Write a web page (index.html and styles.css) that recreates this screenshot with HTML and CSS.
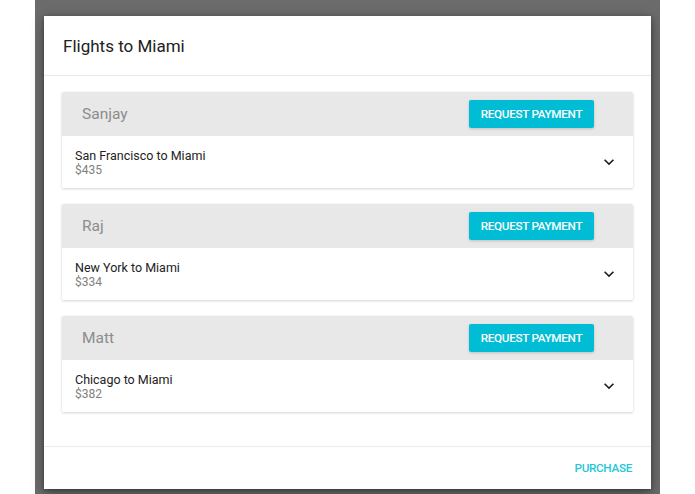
FILE: index.html
```html
<!DOCTYPE html>
<html>
<head>
<meta charset="utf-8">
<link rel="stylesheet" href="styles.css">
</head>
<body>
<div class="page">
  <div class="side"></div>
  <div class="overlay">
    <div class="dialog">
      <div class="dialog-title">Flights to Miami</div>
      <div class="dialog-content">
        <div class="card">
          <div class="card-head">
            <span class="name">Sanjay</span>
            <button class="btn">REQUEST PAYMENT</button>
          </div>
          <div class="card-body">
            <div class="info">
              <div class="route">San Francisco to Miami</div>
              <div class="price">$435</div>
            </div>
            <svg class="chev" viewBox="0 0 24 24" width="20" height="20"><path d="M16.59 8.59L12 13.17 7.41 8.59 6 10l6 6 6-6z"/></svg>
          </div>
        </div>
        <div class="card">
          <div class="card-head">
            <span class="name">Raj</span>
            <button class="btn">REQUEST PAYMENT</button>
          </div>
          <div class="card-body">
            <div class="info">
              <div class="route">New York to Miami</div>
              <div class="price">$334</div>
            </div>
            <svg class="chev" viewBox="0 0 24 24" width="20" height="20"><path d="M16.59 8.59L12 13.17 7.41 8.59 6 10l6 6 6-6z"/></svg>
          </div>
        </div>
        <div class="card">
          <div class="card-head">
            <span class="name">Matt</span>
            <button class="btn">REQUEST PAYMENT</button>
          </div>
          <div class="card-body">
            <div class="info">
              <div class="route">Chicago to Miami</div>
              <div class="price">$382</div>
            </div>
            <svg class="chev" viewBox="0 0 24 24" width="20" height="20"><path d="M16.59 8.59L12 13.17 7.41 8.59 6 10l6 6 6-6z"/></svg>
          </div>
        </div>
      </div>
      <div class="dialog-actions">
        <button class="flat">PURCHASE</button>
      </div>
    </div>
  </div>
  <div class="side"></div>
</div>
</body>
</html>
```

FILE: styles.css
```css
html, body {
  margin: 0;
  padding: 0;
  background: #fff;
  font-family: Roboto, "Liberation Sans", sans-serif;
}
.page {
  display: flex;
  width: 695px;
  height: 494px;
  overflow: hidden;
}
.side {
  width: 35px;
  flex: none;
  background: #fff;
}
.overlay {
  width: 625px;
  flex: none;
  background: #6b6b6b;
  padding: 16px 0 0 9px;
  box-sizing: border-box;
}
.dialog {
  width: 607px;
  height: 473px;
  background: #fff;
  box-shadow: 0 4px 12px rgba(0,0,0,0.35), 0 1px 4px rgba(0,0,0,0.3);
  display: flex;
  flex-direction: column;
}
.dialog-title {
  height: 59px;
  flex: none;
  border-bottom: 1px solid #e8e8e8;
  padding-left: 19px;
  font-size: 17px;
  color: #212121;
  line-height: 61px;
}
.dialog-content {
  padding: 16px 18px 0 18px;
  display: flex;
  flex-direction: column;
  gap: 16px;
  height: 371px;
  flex: none;
  box-sizing: border-box;
  border-bottom: 1px solid #ececec;
}
.card {
  height: 96px;
  flex: none;
  border-radius: 2px;
  box-shadow: 0 1px 3px rgba(0,0,0,0.16), 0 0 1px rgba(0,0,0,0.12);
  overflow: hidden;
  display: flex;
  flex-direction: column;
}
.card-head {
  height: 44px;
  background: #e8e8e8;
  display: flex;
  align-items: center;
  justify-content: space-between;
  padding: 0 39px 0 20px;
}
.name {
  font-size: 15.5px;
  color: #8c8c8c;
}
.btn {
  width: 125px;
  height: 28px;
  border: none;
  border-radius: 2px;
  background: #00bcd4;
  color: #fff;
  font-family: Roboto, "Liberation Sans", sans-serif;
  font-weight: 500;
  font-size: 11.7px;
  letter-spacing: -0.3px;
  padding: 0;
  box-shadow: 0 1px 3px rgba(0,0,0,0.18);
}
.card-body {
  flex: 1;
  background: #fff;
  display: flex;
  align-items: center;
  justify-content: space-between;
  padding: 0 14px 0 13px;
}
.route {
  font-size: 12.5px;
  color: #222;
  line-height: 15px;
}
.price {
  font-size: 12px;
  color: #808080;
  line-height: 14px;
}
.chev {
  fill: #1e1e1e;
  display: block;
}
.dialog-actions {
  flex: 1;
  display: flex;
  justify-content: flex-end;
  align-items: center;
  padding-right: 19px;
}
.flat {
  border: none;
  background: none;
  padding: 0;
  color: #26c6da;
  font-family: Roboto, "Liberation Sans", sans-serif;
  font-weight: 500;
  font-size: 11.7px;
  letter-spacing: -0.3px;
  margin-top: 0;
}
```
